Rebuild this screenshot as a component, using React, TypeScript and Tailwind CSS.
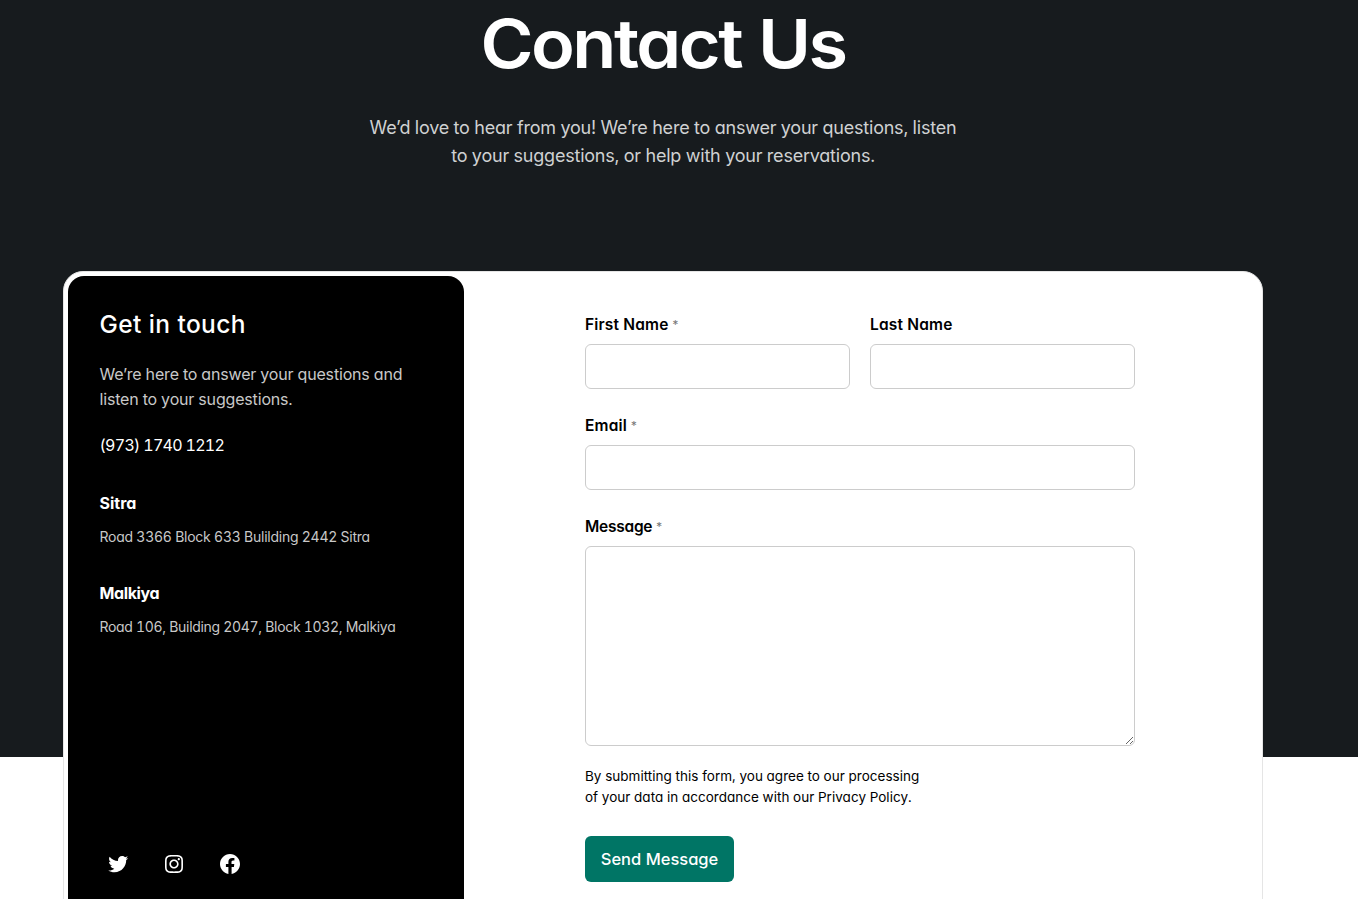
import type { ReactNode } from 'react'

const locations = [
  { name: 'Sitra', address: 'Road 3366 Block 633 Bulilding 2442 Sitra', nameSpacing: 'tracking-normal', spacing: 'tracking-[-0.25px]' },
  { name: 'Malkiya', address: 'Road 106, Building 2047, Block 1032, Malkiya', nameSpacing: 'tracking-[-0.4px]', spacing: 'tracking-[-0.31px]' },
]

const socials = [
  {
    name: 'Twitter',
    path: 'M22.23,5.924c-0.736,0.326-1.527,0.547-2.357,0.646c0.847-0.508,1.498-1.312,1.804-2.27c-0.793,0.47-1.671,0.812-2.606,0.996C18.324,4.498,17.257,4,16.077,4c-2.266,0-4.103,1.837-4.103,4.103c0,0.322,0.036,0.635,0.106,0.935C8.67,8.867,5.647,7.234,3.623,4.751C3.27,5.357,3.067,6.062,3.067,6.814c0,1.424,0.724,2.679,1.825,3.415c-0.673-0.021-1.305-0.206-1.859-0.513c0,0.017,0,0.034,0,0.052c0,1.988,1.414,3.647,3.292,4.023c-0.344,0.094-0.707,0.144-1.081,0.144c-0.264,0-0.521-0.026-0.772-0.074c0.522,1.63,2.038,2.816,3.833,2.85c-1.404,1.1-3.174,1.756-5.096,1.756c-0.331,0-0.658-0.019-0.979-0.057c1.816,1.164,3.973,1.843,6.29,1.843c7.547,0,11.675-6.252,11.675-11.675c0-0.178-0.004-0.355-0.012-0.531C20.985,7.47,21.68,6.747,22.23,5.924z',
  },
  {
    name: 'Instagram',
    path: 'M12,4.622c2.403,0,2.688,0.009,3.637,0.052c0.877,0.04,1.354,0.187,1.671,0.31c0.42,0.163,0.72,0.358,1.035,0.673c0.315,0.315,0.51,0.615,0.673,1.035c0.123,0.317,0.27,0.794,0.31,1.671c0.043,0.949,0.052,1.234,0.052,3.637s-0.009,2.688-0.052,3.637c-0.04,0.877-0.187,1.354-0.31,1.671c-0.163,0.42-0.358,0.72-0.673,1.035c-0.315,0.315-0.615,0.51-1.035,0.673c-0.317,0.123-0.794,0.27-1.671,0.31c-0.949,0.043-1.233,0.052-3.637,0.052s-2.688-0.009-3.637-0.052c-0.877-0.04-1.354-0.187-1.671-0.31c-0.42-0.163-0.72-0.358-1.035-0.673c-0.315-0.315-0.51-0.615-0.673-1.035c-0.123-0.317-0.27-0.794-0.31-1.671C4.631,14.688,4.622,14.403,4.622,12s0.009-2.688,0.052-3.637c0.04-0.877,0.187-1.354,0.31-1.671c0.163-0.42,0.358-0.72,0.673-1.035c0.315-0.315,0.615-0.51,1.035-0.673c0.317-0.123,0.794-0.27,1.671-0.31C9.312,4.631,9.597,4.622,12,4.622M12,3C9.556,3,9.249,3.01,8.289,3.054C7.331,3.098,6.677,3.25,6.105,3.472C5.513,3.702,5.011,4.01,4.511,4.511c-0.5,0.5-0.808,1.002-1.038,1.594C3.25,6.677,3.098,7.331,3.054,8.289C3.01,9.249,3,9.556,3,12c0,2.444,0.01,2.751,0.054,3.711c0.044,0.958,0.196,1.612,0.418,2.185c0.23,0.592,0.538,1.094,1.038,1.594c0.5,0.5,1.002,0.808,1.594,1.038c0.572,0.222,1.227,0.375,2.185,0.418C9.249,20.99,9.556,21,12,21s2.751-0.01,3.711-0.054c0.958-0.044,1.612-0.196,2.185-0.418c0.592-0.23,1.094-0.538,1.594-1.038c0.5-0.5,0.808-1.002,1.038-1.594c0.222-0.572,0.375-1.227,0.418-2.185C20.99,14.751,21,14.444,21,12s-0.01-2.751-0.054-3.711c-0.044-0.958-0.196-1.612-0.418-2.185c-0.23-0.592-0.538-1.094-1.038-1.594c-0.5-0.5-1.002-0.808-1.594-1.038c-0.572-0.222-1.227-0.375-2.185-0.418C14.751,3.01,14.444,3,12,3L12,3z M12,7.378c-2.552,0-4.622,2.069-4.622,4.622S9.448,16.622,12,16.622s4.622-2.069,4.622-4.622S14.552,7.378,12,7.378z M12,15c-1.657,0-3-1.343-3-3s1.343-3,3-3s3,1.343,3,3S13.657,15,12,15z M16.804,6.116c-0.596,0-1.08,0.484-1.08,1.08s0.484,1.08,1.08,1.08c0.596,0,1.08-0.484,1.08-1.08S17.401,6.116,16.804,6.116z',
  },
  {
    name: 'Facebook',
    path: 'M12 2C6.5 2 2 6.5 2 12c0 5 3.7 9.1 8.4 9.9v-7H7.9V12h2.5V9.8c0-2.5 1.5-3.9 3.8-3.9 1.1 0 2.2.2 2.2.2v2.5h-1.3c-1.2 0-1.6.8-1.6 1.6V12h2.8l-.4 2.9h-2.3v7C18.3 21.1 22 17 22 12c0-5.5-4.5-10-10-10z',
  },
]

const inputClass = 'block h-[45px] w-full rounded-[6px] border border-[#ccc] bg-white px-3 outline-none'

function Field({
  label,
  required,
  spacing = 'tracking-[0.15px]',
  children,
}: {
  label: string
  required?: boolean
  spacing?: string
  children: ReactNode
}) {
  return (
    <label className="block">
      <span className="mb-[9px] flex h-[21px] items-center gap-[3px] text-[15.5px] font-semibold text-black">
        <span className={spacing}>{label}</span>
        {required && <span className="text-[12px] font-normal text-[#777]">*</span>}
      </span>
      {children}
    </label>
  )
}

export default function App() {
  return (
    <div className="h-[899px] overflow-hidden bg-white font-['Inter',sans-serif] tabular-nums [font-feature-settings:'cv11']">
      {/* HERO */}
      <header className="h-[757px] bg-[#171b1e] pr-8 text-center">
        <h1 className="scale-x-[1.075] pt-1 text-[67px] leading-[80px] font-semibold tracking-[-2.3px] text-white">
          Contact Us
        </h1>
        <p className="mt-[30px] text-[18px] leading-7 tracking-[-0.22px] text-[#cfd1d2]">
          We’d love to hear from you! We’re here to answer your questions, listen
          <br />
          to your suggestions, or help with your reservations.
        </p>
      </header>

      {/* CARD */}
      <main className="relative -mt-[486px] ml-[63px] flex h-[680px] w-[1200px] rounded-[20px] border border-[#e5e5e5] bg-white p-1">
        <aside className="flex w-[396px] shrink-0 flex-col rounded-2xl bg-black px-[31.5px] text-white">
          <h2 className="mt-[31px] text-[24.5px] leading-[34px] font-medium tracking-[0.4px]">Get in touch</h2>
          <p className="mt-[21px] text-[16px] leading-[25px] tracking-[-0.17px] text-[#c8c8c8]">
            We’re here to answer your questions and
            <br />
            listen to your suggestions.
          </p>
          <p className="mt-[21px] text-[16px] leading-[25px] tracking-[-0.7px]">(973) 1740 1212</p>
          <div className="mt-[33px] space-y-8">
            {locations.map((item) => (
              <div key={item.name}>
                <h3 className={`text-[16px] leading-[24px] font-bold ${item.nameSpacing}`}>{item.name}</h3>
                <p className={`mt-[10px] text-[14px] leading-[24px] text-[#c8c8c8] ${item.spacing}`}>{item.address}</p>
              </div>
            ))}
          </div>
          <div className="mt-[213px] ml-[6.5px] flex gap-8">
            {socials.map((item) => (
              <a key={item.name} href="#" aria-label={item.name}>
                <svg viewBox="0 0 24 24" className="size-6" fill="currentColor">
                  <path d={item.path} />
                </svg>
              </a>
            ))}
          </div>
        </aside>

        <form className="mt-[38px] ml-[121px] w-[550px]">
          <div className="grid grid-cols-2 gap-5">
            <Field label="First Name" required>
              <input className={inputClass} />
            </Field>
            <Field label="Last Name">
              <input className={inputClass} />
            </Field>
          </div>
          <div className="mt-[26px]">
            <Field label="Email" required>
              <input className={inputClass} />
            </Field>
          </div>
          <div className="mt-[26px]">
            <Field label="Message" required spacing="tracking-[-0.25px]">
              <textarea className="block h-[200px] w-full resize rounded-[6px] border border-[#ccc] bg-white p-3 outline-none" />
            </Field>
          </div>
          <p className="mt-5 text-[13.5px] leading-[21px] tracking-[0.03px] text-black">
            By submitting this form, you agree to our processing
            <br />
            of your data in accordance with our Privacy Policy.
          </p>
          <button type="button" className="mt-7 flex h-[46px] w-[149px] items-center justify-center rounded-[6px] bg-[#007565] text-[16.5px] font-medium whitespace-nowrap text-white">
            Send Message
          </button>
        </form>
      </main>
    </div>
  )
}
